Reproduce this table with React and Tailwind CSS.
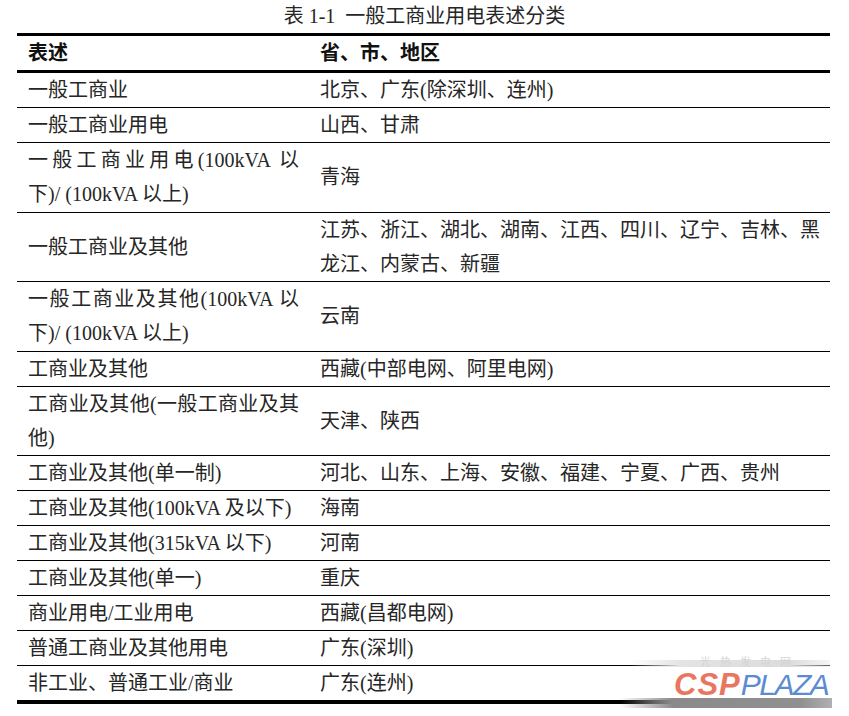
const rows = [
  { left: ['一般工商业'], right: ['北京、广东(除深圳、连州)'] },
  { left: ['一般工商业用电'], right: ['山西、甘肃'] },
  { left: ['一般工商业用电(100kVA 以', '下)/ (100kVA 以上)'], right: ['青海'] },
  { left: ['一般工商业及其他'], right: ['江苏、浙江、湖北、湖南、江西、四川、辽宁、吉林、黑', '龙江、内蒙古、新疆'] },
  { left: ['一般工商业及其他(100kVA 以', '下)/ (100kVA 以上)'], right: ['云南'] },
  { left: ['工商业及其他'], right: ['西藏(中部电网、阿里电网)'] },
  { left: ['工商业及其他(一般工商业及其', '他)'], right: ['天津、陕西'] },
  { left: ['工商业及其他(单一制)'], right: ['河北、山东、上海、安徽、福建、宁夏、广西、贵州'] },
  { left: ['工商业及其他(100kVA 及以下)'], right: ['海南'] },
  { left: ['工商业及其他(315kVA 以下)'], right: ['河南'] },
  { left: ['工商业及其他(单一)'], right: ['重庆'] },
  { left: ['商业用电/工业用电'], right: ['西藏(昌都电网)'] },
  { left: ['普通工商业及其他用电'], right: ['广东(深圳)'] },
  { left: ['非工业、普通工业/商业'], right: ['广东(连州)'] },
];

function Cell({ lines, className }) {
  // wrapped cells: first line is spread to the column edge, like the Word source
  return (
    <div className={`flex flex-col justify-center ${className}`}>
      {lines.map((line, i) => (
        <div
          key={i}
          className={
            lines.length > 1 && i === 0
              ? 'text-justify [text-align-last:justify] whitespace-nowrap'
              : 'whitespace-nowrap'
          }
        >
          {line}
        </div>
      ))}
    </div>
  );
}

function Watermark() {
  return (
    <div className="absolute left-[620px] top-[655px] w-[215px] h-[56px] pointer-events-none">
      <div className="absolute left-[10px] top-[5px] w-[200px] h-[7px] bg-[linear-gradient(to_right,rgba(220,220,220,0),#e4e4e4_25%,#dcdcdc_80%,rgba(230,230,230,0.4))]" />
      <div className="absolute left-[80px] top-[0px] text-[11px] leading-[12px] tracking-[9px] text-[#d4d4d4] [font-family:'Noto_Sans_CJK_SC',sans-serif]">
        光热发电网
      </div>
      <div className="absolute left-[54px] top-[18px] flex items-baseline leading-[24px] [font-family:'Liberation_Sans',Arial,sans-serif] italic">
        <span className="text-[31px] font-black text-[#e9775f] tracking-[1px]">CSP</span>
        <span className="text-[30px] font-normal text-[#5b8bd2] tracking-[-1.5px]">PLAZA</span>
      </div>
      <div className="absolute left-[0px] top-[43px] w-[212px] h-[10px] bg-[linear-gradient(to_right,rgba(120,120,120,0),#8a8a8a_25%,#909090_85%,#b0b0b0)]" />
    </div>
  );
}

export default function App() {
  return (
    <div className="relative w-[849px] h-[716px] bg-white text-[#262626] text-[20px] [font-family:'Liberation_Serif','Noto_Sans_CJK_SC',serif] overflow-hidden">
      <div className="h-[33px] flex items-center justify-center leading-[33px] whitespace-pre">
        表 1-1  一般工商业用电表述分类
      </div>

      <div className="ml-[17px] w-[813px]">
        <div className="h-[3px] bg-black" />
        <div className="flex h-[34px] items-center font-bold text-[#111]">
          <div className="w-[293px] pl-[11px]">表述</div>
          <div className="flex-1 pl-[10px]">省、市、地区</div>
        </div>
        <div className="h-[3px] bg-black" />

        {rows.map((row, i) => (
          <div
            key={i}
            className={`flex ${i < rows.length - 1 ? 'border-b border-black' : ''} ${
              row.left.length > 1 || row.right.length > 1 ? 'leading-[34.3px]' : 'leading-[34px]'
            }`}
          >
            <Cell lines={row.left} className="w-[293px] pl-[11px] pr-[11px]" />
            <Cell lines={row.right} className="flex-1 pl-[10px] pr-[10px]" />
          </div>
        ))}

        <div className="h-[4px] bg-[linear-gradient(to_right,#000_0%,#000_76%,#555_84%,#8a8a8a_92%,#999_100%)]" />
      </div>

      <Watermark />
    </div>
  );
}
